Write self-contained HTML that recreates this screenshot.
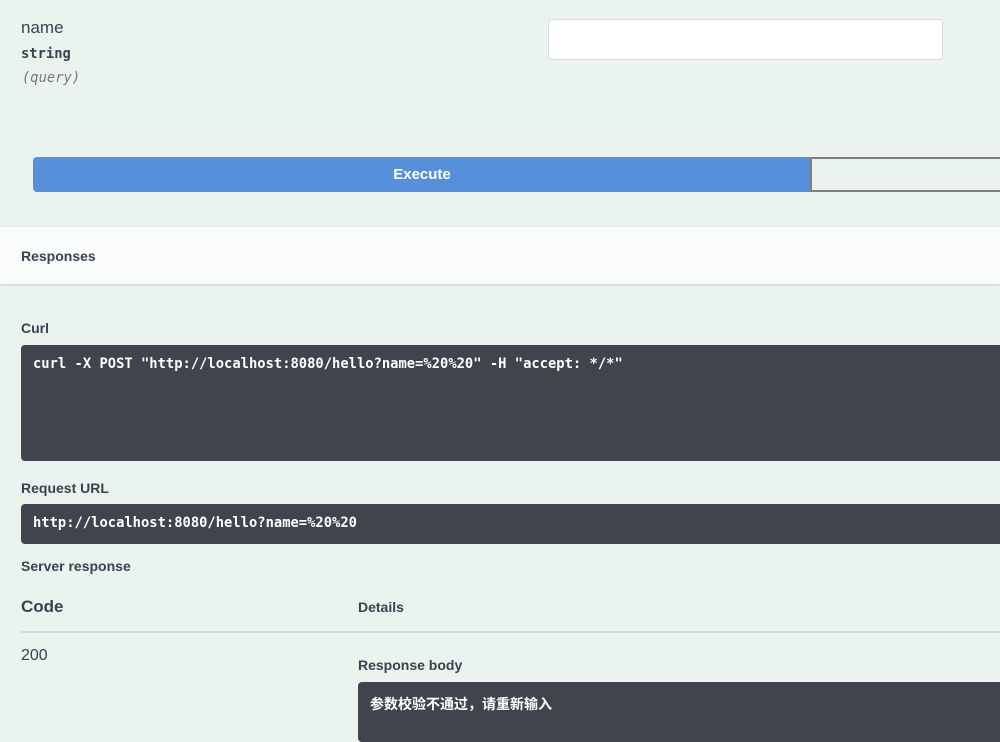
<!DOCTYPE html>
<html><head><meta charset="utf-8"><style>
body{margin:0;width:1000px;height:730px;overflow:hidden;background:#ebf3ee;font-family:"Liberation Sans","Noto Sans CJK SC",sans-serif;color:#3b4151;position:relative}
div{position:absolute;box-sizing:border-box}
.mono{font-family:"DejaVu Sans Mono","Noto Sans CJK SC",monospace}
.lbl{font-size:14px;font-weight:bold;left:21px}
.dark{background:#41444e;border-radius:4px;color:#fff;font-weight:bold;font-size:13.8px}
</style></head><body>
<div style="left:21px;top:18px;font-size:17px">name</div>
<div class="mono" style="left:21px;top:46px;font-size:13.8px;font-weight:bold">string</div>
<div class="mono" style="left:22px;top:70px;font-size:13.8px;font-style:italic;color:#777">(query)</div>
<div style="left:548px;top:19px;width:395px;height:41px;background:#fff;border:1px solid #d9dcdb;border-radius:4px"></div>
<div style="left:33px;top:157px;width:778px;height:35px;background:#5690da;border-radius:4px 0 0 4px;color:#fff;font-weight:bold;font-size:15px;text-align:center;line-height:35px">Execute</div>
<div style="left:810px;top:157px;width:200px;height:35px;border:2px solid #7f7f7f;background:#ebf3ee"></div>
<div style="left:0;top:227px;width:1000px;height:57px;background:#fafbfb;box-shadow:0 1px 2px rgba(0,0,0,.15)"></div>
<div class="lbl" style="top:248px">Responses</div>
<div class="lbl" style="top:320px">Curl</div>
<div class="dark mono" style="left:21px;top:345px;width:990px;height:116px;padding:11px 12px">curl -X POST "http://localhost:8080/hello?name=%20%20" -H "accept: */*"</div>
<div class="lbl" style="top:480px">Request URL</div>
<div class="dark mono" style="left:21px;top:504px;width:990px;height:40px;padding:11px 12px">http://localhost:8080/hello?name=%20%20</div>
<div class="lbl" style="top:558px">Server response</div>
<div style="left:21px;top:597px;font-size:17px;font-weight:bold">Code</div>
<div style="left:358px;top:599px;font-size:14px;font-weight:bold">Details</div>
<div style="left:21px;top:631px;width:990px;height:2px;background:#d7dcd9"></div>
<div style="left:21px;top:647px;font-size:16px">200</div>
<div style="left:358px;top:657px;font-size:14px;font-weight:bold">Response body</div>
<div class="dark" style="left:358px;top:682px;width:660px;height:60px;padding:12px 12px;font-size:14px">参数校验不通过，请重新输入</div>
</body></html>
